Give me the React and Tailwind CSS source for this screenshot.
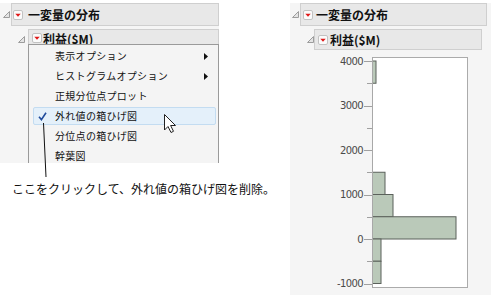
import React from "react";

const Tri = () => (
  <svg width="7" height="7" viewBox="0 0 7 7">
    <polygon points="6.5,0.5 6.5,6.5 0.5,6.5" fill="#e4e4e4" stroke="#9c9c9c" strokeWidth="1" />
  </svg>
);

const RedBtn = () => (
  <svg width="10" height="10" viewBox="0 0 10 10" className="shrink-0">
    <rect x="0.5" y="0.5" width="9" height="9" rx="1.5" fill="#fbfbfb" stroke="#c2c2c2" />
    <polygon points="2.3,3.8 7.7,3.8 5,6.8" fill="#e01818" />
  </svg>
);

const SubArrow = () => (
  <svg width="4" height="7" viewBox="0 0 4 7">
    <polygon points="0,0 4,3.5 0,7" fill="#111" />
  </svg>
);

const items = [
  { t: "表示オプション", sub: true },
  { t: "ヒストグラムオプション", sub: true },
  { t: "正規分位点プロット" },
  { t: "外れ値の箱ひげ図", hl: true },
  { t: "分位点の箱ひげ図" },
  { t: "幹葉図" },
];

const Y = (v) => 187 - v * 0.0445;

const bars = [
  { lo: 3500, hi: 4000, w: 86 },
  { lo: 1000, hi: 1500, w: 95 },
  { lo: 500, hi: 1000, w: 103 },
  { lo: 0, hi: 500, w: 166 },
  { lo: -500, hi: 0, w: 91 },
  { lo: -1000, hi: -500, w: 91 },
];

function Chart() {
  const majors = [4000, 3000, 2000, 1000, 0, -1000];
  const minors = [3500, 2500, 1500, 500, -500];
  return (
    <svg width="201" height="240" viewBox="0 0 201 240" className="mt-[2px]">
      <rect x="82.5" y="5.5" width="95" height="230" fill="#ffffff" stroke="#ababab" />
      {bars.map((b, i) => (
        <rect
          key={i}
          x="82.5"
          y={Y(b.hi)}
          width={b.w - 82.5}
          height={Y(b.lo) - Y(b.hi)}
          fill="#bac9b9"
          stroke="#5b615b"
          strokeWidth="1"
        />
      ))}
      <line x1="82.5" y1="5" x2="82.5" y2="236" stroke="#a8a8a8" />
      {majors.map((v) => (
        <g key={v}>
          <line x1="74" y1={Math.round(Y(v)) + 0.5} x2="82" y2={Math.round(Y(v)) + 0.5} stroke="#a0a0a0" />
          <text
            x="73"
            y={Y(v) + 3.6}
            textAnchor="end"
            fontSize="10"
            fontFamily="'DejaVu Sans', 'Liberation Sans', sans-serif"
            fill="#4a4a4a"
            letterSpacing="-0.6"
          >
            {v}
          </text>
        </g>
      ))}
      {minors.map((v) => (
        <line key={v} x1="77" y1={Math.round(Y(v)) + 0.5} x2="82" y2={Math.round(Y(v)) + 0.5} stroke="#a0a0a0" />
      ))}
    </svg>
  );
}

export default function App() {
  return (
    <div className="relative w-[498px] h-[295px] bg-white overflow-hidden flex font-['Noto_Sans_CJK_JP','Noto_Sans_CJK_SC',sans-serif] text-[#111]">
      {/* left column */}
      <div className="w-[219px] shrink-0 flex flex-col pt-[3px]">
        <div className="relative h-[160px] bg-[#f5f5f5]">
          <div className="flex items-center h-[23px]">
            <div className="w-[11px] h-full flex items-center pl-[3px]">
              <Tri />
            </div>
            <div className="flex-1 h-full flex items-center gap-[5px] pl-[1px] bg-[#e8e8e8] border border-[#cfcfcf]">
              <RedBtn />
              <span className="text-[12px] font-bold leading-none">一変量の分布</span>
            </div>
          </div>
          <div className="flex items-center h-[20px] mt-[3px] pl-[17px]">
            <div className="w-[11px] h-full flex items-center pl-[1px]">
              <Tri />
            </div>
            <div className="flex-1 h-full flex items-start pt-[3px] gap-[1px] pl-[3px] bg-[#e8e8e8] border border-[#cfcfcf]">
              <RedBtn />
              <span className="text-[12px] font-bold leading-none">利益($M)</span>
            </div>
          </div>
          {/* popup menu */}
          <div className="absolute left-[28px] top-[41px] w-[191px] h-[119px] overflow-hidden bg-[#f4f4f4] border-l border-t border-r border-[#9a9a9a] pt-[1px]">
            {items.map((it) => (
              <div key={it.t} className="relative h-[20px] flex items-center pl-[26px] pr-[10px]">
                {it.hl && (
                  <div className="absolute left-[4px] right-[2px] top-[1px] bottom-[1px] rounded-[2px] bg-[#e4f0fa] border border-[#c3dcf1]" />
                )}
                {it.hl && (
                  <svg className="absolute left-[9px] top-[6px]" width="9" height="9" viewBox="0 0 9 9">
                    <path d="M1 4.8 L3.4 7.6 L8 0.8" fill="none" stroke="#1f4b9c" strokeWidth="1.6" />
                  </svg>
                )}
                <span className="relative flex-1 text-[10px] leading-none tracking-[0.3px]">{it.t}</span>
                {it.sub && (
                  <span className="relative">
                    <SubArrow />
                  </span>
                )}
              </div>
            ))}
          </div>
        </div>
        <div className="mt-[18px] pl-[12px] text-[12px] leading-[16px] whitespace-nowrap text-[#111]">
          ここをクリックして、外れ値の箱ひげ図を削除。
        </div>
      </div>

      {/* right panel */}
      <div className="ml-[71px] mt-[3px] w-[201px] h-[292px] shrink-0 bg-[#f5f5f5] flex flex-col">
        <div className="flex items-center h-[23px]">
          <div className="w-[10px] h-full flex items-center pl-[2px]">
            <Tri />
          </div>
          <div className="w-[187px] h-full flex items-center gap-[3px] pl-[2px] bg-[#e8e8e8] border border-[#cfcfcf]">
            <RedBtn />
            <span className="text-[12px] font-bold leading-none">一変量の分布</span>
          </div>
        </div>
        <div className="flex items-center h-[21px] mt-[3px] pl-[17px]">
          <div className="w-[7px] h-full flex items-center">
            <Tri />
          </div>
          <div className="w-[168px] h-full flex items-center gap-[2px] pl-[3px] bg-[#e8e8e8] border border-[#cfcfcf]">
            <RedBtn />
            <span className="text-[12px] font-bold leading-none">利益($M)</span>
          </div>
        </div>
        <Chart />
      </div>

      {/* annotation overlay: leader line and mouse cursor */}
      <svg className="absolute left-0 top-0 pointer-events-none" width="498" height="295" viewBox="0 0 498 295">
        <line x1="43.5" y1="123" x2="46" y2="177" stroke="#111" strokeWidth="1" />
        <path
          d="M164.5 114.5 L164.5 130 L168 126.5 L171 132.5 L173.5 131.3 L170.6 125.5 L175.5 125.5 Z"
          fill="#ffffff"
          stroke="#222"
          strokeWidth="1"
          strokeLinejoin="round"
        />
      </svg>
    </div>
  );
}
